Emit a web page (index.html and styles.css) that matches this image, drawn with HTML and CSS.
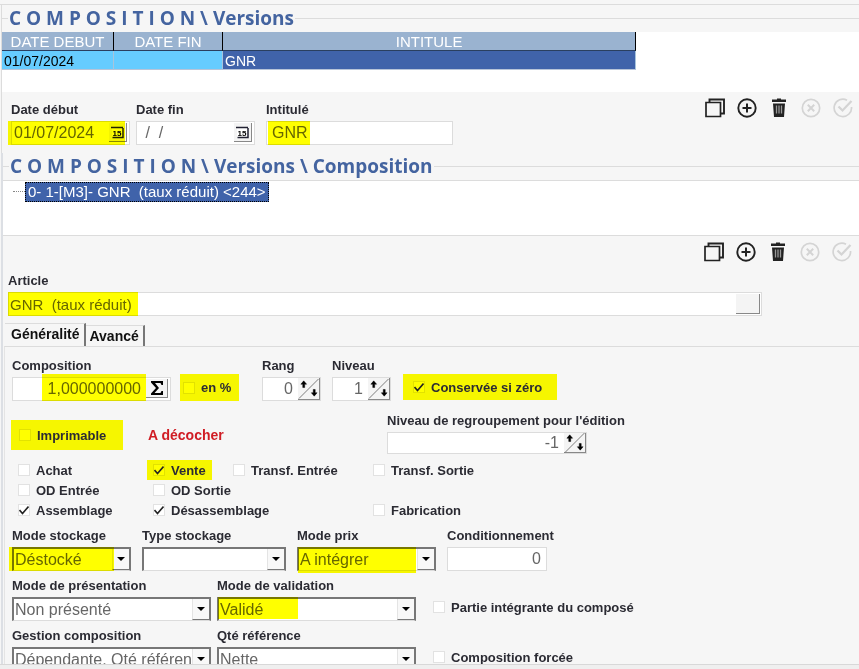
FILE: index.html
```html
<!DOCTYPE html>
<html lang="fr">
<head>
    <meta charset="UTF-8">
    <meta name="viewport" content="width=device-width, initial-scale=1.0">
    <title>Composition - Versions</title>
    <link rel="stylesheet" href="styles.css">
</head>
<body>

    <!-- Icônes des barres d'outils -->
    <svg class="sprite" aria-hidden="true">
        <symbol id="i-copy" viewBox="0 0 20 20">
            <path d="M1 4.500h14.500v14H1z" fill="none" stroke="currentColor" stroke-width="1.700"/>
            <path d="M4.500 4V1.500H19v14h-3" fill="none" stroke="currentColor" stroke-width="1.900"/>
        </symbol>
        <symbol id="i-add" viewBox="0 0 20 20">
            <circle cx="10" cy="10" r="8.700" fill="none" stroke="currentColor" stroke-width="1.900"/>
            <path d="M10 5.500v9M5.500 10h9" stroke="currentColor" stroke-width="2"/>
        </symbol>
        <symbol id="i-trash" viewBox="0 0 20 20">
            <path d="M3 1.500h5V.5h4v1h5v2.500H3zM4 5.500h12l-1 13.500H5z" fill="currentColor"/>
            <path d="M7.500 7.500v8M10 7.500v8M12.500 7.500v8" stroke="#999" stroke-width="1.300"/>
        </symbol>
        <symbol id="i-cancel" viewBox="0 0 20 20">
            <circle cx="10" cy="10" r="8.700" fill="none" stroke="currentColor" stroke-width="1.700"/>
            <path d="M6.800 6.800l6.400 6.400M13.200 6.800l-6.400 6.400" stroke="currentColor" stroke-width="2"/>
        </symbol>
        <symbol id="i-ok" viewBox="0 0 20 20">
            <path d="M14 2.200A8.700 8.700 0 1 0 18.500 9" fill="none" stroke="currentColor" stroke-width="1.700"/>
            <path d="M5.500 8.500l4 4L18.500 3" fill="none" stroke="currentColor" stroke-width="2.200"/>
        </symbol>
        <symbol id="i-calendar" viewBox="0 0 13 13">
            <path d="M1 2h10v9H1z" fill="#fff"/>
            <path d="M0 1.500h12M1.500 11.500h10.500V2" fill="none" stroke="#223" stroke-width="1.500"/>
            <text x="6" y="9.500" text-anchor="middle" font-family="Liberation Sans" font-size="8" font-weight="bold" fill="#000">15</text>
        </symbol>
        <symbol id="i-sum" viewBox="0 0 14 16">
            <path d="M1 1h12v4h-1.500L10.500 3H5l4 5-4.500 5h6l1-2H13v4H1v-1.500L6 8 1 2.500z" fill="#000"/>
        </symbol>
        <symbol id="i-spin" viewBox="0 0 22 22">
            <path d="M1 21.500L21.500 1" stroke="#777" stroke-width="1"/>
            <path d="M6 3l3 3.500H7V10H5V6.500H3zM17 19l-3-3.500h2V12h2v3.500h2z" fill="#000" stroke="#000" stroke-width=".5"/>
        </symbol>
    </svg>

    <main class="window">

        <section class="versions">
            <h2 class="legend">C O M P O S I T I O N \ Versions</h2>
            <div class="list">
                <table>
                    <thead>
                        <tr><th class="col-debut">DATE DEBUT</th><th class="col-fin">DATE FIN</th><th>INTITULE</th></tr>
                    </thead>
                    <tbody>
                        <tr><td>01/07/2024</td><td></td><td class="selected">GNR</td></tr>
                    </tbody>
                </table>
            </div>

            <div class="version-form">
                <div class="field w-date">
                    <label for="debut">Date début</label>
                    <div class="control mark mark-debut">
                        <input type="text" id="debut" value="01/07/2024">
                        <button type="button" class="cal" aria-label="Calendrier date début"><svg><use href="#i-calendar"/></svg></button>
                    </div>
                </div>
                <div class="field w-date">
                    <label for="fin">Date fin</label>
                    <div class="control">
                        <input type="text" id="fin" class="empty-date" value=" /  /">
                        <button type="button" class="cal" aria-label="Calendrier date fin"><svg><use href="#i-calendar"/></svg></button>
                    </div>
                </div>
                <div class="field w-intitule">
                    <label for="intitule">Intitulé</label>
                    <div class="control mark mark-intitule">
                        <input type="text" id="intitule" class="indent" value="GNR">
                    </div>
                </div>
                <div class="toolbar">
                    <button type="button" aria-label="Dupliquer"><svg><use href="#i-copy"/></svg></button>
                    <button type="button" aria-label="Ajouter"><svg><use href="#i-add"/></svg></button>
                    <button type="button" aria-label="Supprimer"><svg><use href="#i-trash"/></svg></button>
                    <button type="button" aria-label="Annuler" disabled><svg><use href="#i-cancel"/></svg></button>
                    <button type="button" aria-label="Valider" disabled><svg><use href="#i-ok"/></svg></button>
                </div>
            </div>
        </section>

        <section class="composition">
            <h2 class="legend">C O M P O S I T I O N \ Versions \ Composition</h2>
            <div class="tree">
                <span class="branch"></span><span class="node">0- 1-[M3]- GNR&nbsp; (taux réduit) &lt;244&gt;</span>
            </div>

            <div class="toolbar toolbar-row">
                <button type="button" aria-label="Dupliquer"><svg><use href="#i-copy"/></svg></button>
                <button type="button" aria-label="Ajouter"><svg><use href="#i-add"/></svg></button>
                <button type="button" aria-label="Supprimer"><svg><use href="#i-trash"/></svg></button>
                <button type="button" aria-label="Annuler" disabled><svg><use href="#i-cancel"/></svg></button>
                <button type="button" aria-label="Valider" disabled><svg><use href="#i-ok"/></svg></button>
            </div>

            <div class="field article">
                <label for="article">Article</label>
                <div class="control mark mark-article">
                    <input type="text" id="article" value="GNR  (taux réduit)">
                    <button type="button" class="browse" aria-label="Choisir un article"></button>
                </div>
            </div>

            <div class="tabs" role="tablist">
                <button type="button" role="tab" class="tab active" aria-selected="true">Généralité</button>
                <button type="button" role="tab" class="tab" aria-selected="false">Avancé</button>
            </div>

            <div class="panel">
                <div class="row">
                    <div class="field w-compo">
                        <label for="compo">Composition</label>
                        <div class="control mark mark-compo">
                            <input type="text" id="compo" class="num" value="1,000000000">
                            <button type="button" aria-label="Calculer"><svg class="i-sum"><use href="#i-sum"/></svg></button>
                        </div>
                    </div>
                    <label class="check yellow check-percent"><input type="checkbox">en %</label>
                    <div class="field w-spin rang">
                        <label for="rang">Rang</label>
                        <div class="control">
                            <input type="text" id="rang" class="num" value="0">
                            <button type="button" class="spin" aria-label="Modifier le rang"><svg><use href="#i-spin"/></svg></button>
                        </div>
                    </div>
                    <div class="field w-spin">
                        <label for="niveau">Niveau</label>
                        <div class="control">
                            <input type="text" id="niveau" class="num" value="1">
                            <button type="button" class="spin" aria-label="Modifier le niveau"><svg><use href="#i-spin"/></svg></button>
                        </div>
                    </div>
                    <label class="check yellow check-zero"><input type="checkbox" checked>Conservée si zéro</label>
                </div>

                <div class="row row-print">
                    <label class="check yellow check-print"><input type="checkbox">Imprimable</label>
                    <p class="note">A décocher</p>
                    <div class="field w-group">
                        <label for="groupe">Niveau de regroupement pour l'édition</label>
                        <div class="control">
                            <input type="text" id="groupe" class="num" value="-1">
                            <button type="button" class="spin" aria-label="Modifier le niveau de regroupement"><svg><use href="#i-spin"/></svg></button>
                        </div>
                    </div>
                </div>

                <div class="checks">
                    <label class="check"><input type="checkbox">Achat</label>
                    <label class="check yellow"><input type="checkbox" checked>Vente</label>
                    <label class="check"><input type="checkbox">Transf. Entrée</label>
                    <label class="check"><input type="checkbox">Transf. Sortie</label>
                    <label class="check first"><input type="checkbox">OD Entrée</label>
                    <label class="check"><input type="checkbox">OD Sortie</label>
                    <label class="check first"><input type="checkbox" checked>Assemblage</label>
                    <label class="check wide"><input type="checkbox" checked>Désassemblage</label>
                    <label class="check"><input type="checkbox">Fabrication</label>
                </div>

                <div class="row row-modes">
                    <div class="field w-stock">
                        <label for="stockage">Mode stockage</label>
                        <div class="combo mark mark-stock"><select id="stockage"><option>Déstocké</option></select></div>
                    </div>
                    <div class="field w-type">
                        <label for="type">Type stockage</label>
                        <div class="combo"><select id="type"><option></option></select></div>
                    </div>
                    <div class="field w-prix">
                        <label for="prix">Mode prix</label>
                        <div class="combo mark mark-prix"><select id="prix"><option>A intégrer</option></select></div>
                    </div>
                    <div class="field w-cond">
                        <label for="cond">Conditionnement</label>
                        <div class="control"><input type="text" id="cond" class="num" value="0"></div>
                    </div>
                </div>

                <div class="row row-wide">
                    <div class="field w-wide">
                        <label for="presentation">Mode de présentation</label>
                        <div class="combo"><select id="presentation"><option>Non présenté</option></select></div>
                    </div>
                    <div class="field w-wide">
                        <label for="validation">Mode de validation</label>
                        <div class="combo mark mark-valid"><select id="validation"><option>Validé</option></select></div>
                    </div>
                    <label class="check check-end"><input type="checkbox">Partie intégrante du composé</label>
                </div>

                <div class="row row-wide">
                    <div class="field w-wide">
                        <label for="gestion">Gestion composition</label>
                        <div class="combo"><select id="gestion"><option>Dépendante, Qté référence</option></select></div>
                    </div>
                    <div class="field w-wide">
                        <label for="qte">Qté référence</label>
                        <div class="combo"><select id="qte"><option>Nette</option></select></div>
                    </div>
                    <label class="check check-end"><input type="checkbox">Composition forcée</label>
                </div>
            </div>
        </section>
    </main>

    <footer class="status"></footer>

</body>
</html>
```
FILE: styles.css
```css
* {
    box-sizing: border-box;
}

body {
    margin: 0;
    height: 100vh;
    display: flex;
    flex-direction: column;
    overflow: hidden;
    background-color: #f6f6f6;
    font-family: "Liberation Sans", Arial, sans-serif;
    font-size: 16px;
    color: #2b2b33;
}

input, select, button {
    font-family: inherit;
    font-size: 16px;
    color: #666;
    margin: 0;
    border-radius: 0;
}

button {
    padding: 0;
    border: none;
    background: none;
    cursor: pointer;
}

.sprite {
    display: none;
}

.window {
    flex: 1;
    min-height: 0;
    overflow: hidden;
    margin-top: 4px;
    border-top: 1px solid #dcdcdc;
}

.status {
    height: 5px;
    flex-shrink: 0;
    background-color: #efefef;
    border-top: 1px solid #d8d8d8;
}

/* titres de groupe */
.legend {
    display: flex;
    align-items: center;
    gap: 1px;
    margin: 0;
    height: 27px;
    padding-bottom: 1px;
    font-family: "Open Sans", sans-serif;
    font-size: 19px;
    font-weight: bold;
    line-height: 25px;
    white-space: pre;
    color: #4464a0;
}

.legend::before, .legend::after {
    content: "";
    width: 6px;
    border-top: 1px solid #dcdcdc;
}

.legend::after {
    flex: 1;
}

.versions {
    border-left: 1px solid #dcdcdc;
    margin-left: 1px;
}

.composition {
    border-left: 2px solid #dcdfe4;
    margin-left: 1px;
}

/* liste des versions */
.list {
    min-height: 60px;
    background-color: white;
}

table {
    width: 74%;
    table-layout: fixed;
    border-collapse: separate;
    border-spacing: 0;
    font-size: 14px;
    line-height: 16px;
}

th {
    padding: 2px 0 0;
    height: 19px;
    font-size: 15px;
    font-weight: normal;
    color: white;
    background-color: #9ab3d0;
    border-right: 1px solid #000;
    border-bottom: 1px solid #2a3f60;
}

td {
    height: 19px;
    padding: 2px 2px 0;
    color: #000;
    background-color: #66ccff;
    border-right: 1px solid #a8c4dc;
    border-bottom: 1px solid #b8c4d8;
}

td.selected {
    background-color: #4063aa;
    color: white;
}

.col-debut {
    width: 112px;
}

.col-fin {
    width: 109px;
}

.version-form {
    display: flex;
    align-items: flex-start;
    gap: 6px;
    padding: 10px 6px 8px 9px;
}

/* champs */
.field {
    display: flex;
    flex-direction: column;
    gap: 4px;
}

.field > label {
    font-size: 13px;
    font-weight: bold;
    line-height: 15px;
    white-space: nowrap;
}

.control, .combo {
    position: relative;
    display: flex;
    height: 24px;
    background-color: white;
    border: 1px solid #dcdcdc;
}

.control input {
    flex: 1;
    min-width: 0;
    width: 100%;
    padding: 0 2px;
    border: none;
    background: none;
    outline: none;
}

.control .num {
    text-align: right;
    padding-right: 5px;
}

.control .indent {
    padding-left: 5px;
}

.control .empty-date {
    padding-left: 4px;
    white-space: pre;
}

.control button {
    width: 22px;
    margin: 1px 2px 2px 0;
    display: flex;
    align-items: center;
    justify-content: center;
    background-color: #f4f4f4;
    border-right: 1px solid #888;
    border-bottom: 1px solid #888;
}

.control .cal {
    width: 18px;
}

.control .browse {
    width: 24px;
    margin: 1px;
}

.control .spin {
    width: 22px;
    margin: 0;
}

.spin svg {
    width: 22px;
    height: 21px;
}

.cal svg {
    width: 13px;
    height: 13px;
}

.i-sum {
    width: 14px;
    height: 16px;
}

.w-date {
    width: 119px;
}

.version-form .w-date + .w-date {
    margin-right: 5px;
}

.w-intitule {
    width: 187px;
}

/* surligneur */
.mark::after {
    content: "";
    position: absolute;
    background-color: #ff0;
    mix-blend-mode: multiply;
    pointer-events: none;
    top: -1px;
    bottom: -1px;
    left: -1px;
}

.mark-debut::after {
    left: -4px;
    right: 4px;
}

.mark-intitule::after {
    left: 1px;
    width: 42px;
}

.mark-article::after {
    width: 130px;
}

.mark-compo::after {
    top: -4px;
    left: 29px;
    right: 24px;
}

.mark-stock::after {
    left: -5px;
    right: 15px;
}

.mark-prix::after {
    bottom: -3px;
    right: 18px;
}

.mark-valid::after {
    width: 80px;
    bottom: 1px;
}

.yellow {
    background-color: #f6f600;
}

/* outils */
.toolbar {
    display: flex;
    gap: 12px;
    margin-left: auto;
    margin-top: -4px;
}

.toolbar button {
    color: #222;
    height: 20px;
}

.toolbar button:disabled {
    color: #d4d4d4;
    cursor: default;
}

.toolbar svg {
    display: block;
    width: 20px;
    height: 20px;
}

.toolbar-row {
    justify-content: flex-end;
    margin: 0;
    padding: 6px 7px 11px;
}

/* arbre */
.tree {
    display: flex;
    align-items: flex-start;
    min-height: 56px;
    padding: 1px 0 0 10px;
    background-color: white;
    border-top: 1px solid #dcdcdc;
    border-bottom: 1px solid #dcdcdc;
}

.branch {
    width: 12px;
    margin-top: 9px;
    border-top: 1px dotted #888;
}

.node {
    padding: 0 2px;
    font-size: 15px;
    line-height: 18px;
    color: white;
    background-color: #4063aa;
    border: 1px dotted #000;
    white-space: pre;
}

.article {
    margin-right: 97px;
    padding-left: 5px;
}

.article input {
    padding-left: 1px;
    font-size: 15px;
}

/* onglets */
.tabs {
    display: flex;
    align-items: flex-end;
    height: 23px;
    margin: 7px 0 0 2px;
}

.tab {
    height: 21px;
    padding: 0 4px 0 3px;
    font-size: 14px;
    font-weight: bold;
    color: #111;
    border-top: 1px solid #dcdcdc;
    border-right: 2px solid #777;
}

.tab.active {
    height: 23px;
    padding: 0 5px 2px 6px;
}

.panel {
    margin-left: 1px;
    padding: 11px 7px 0;
    border-top: 1px solid #dcdcdc;
    border-left: 1px solid #e4e4e4;
}

.row {
    display: flex;
    align-items: flex-end;
    gap: 11px;
}

.w-compo {
    width: 159px;
}

.w-spin {
    width: 59px;
}

.rang {
    margin-left: 12px;
}

.check {
    display: flex;
    align-items: center;
    gap: 6px;
    height: 20px;
    font-size: 13px;
    font-weight: bold;
    white-space: nowrap;
}

.check input {
    appearance: none;
    flex-shrink: 0;
    width: 12px;
    height: 12px;
    margin: 0;
    background-color: white;
    border: 1px solid #e2e2e2;
}

.check input:checked {
    background: white url("data:image/svg+xml,%3Csvg xmlns='http://www.w3.org/2000/svg' viewBox='0 0 10 10'%3E%3Cpath d='M0.500 5l3 3.500L9.500 1.500' fill='none' stroke='%23222' stroke-width='1.600'/%3E%3C/svg%3E") center / 10px 10px no-repeat;
}

.yellow input, .yellow input:checked {
    background-color: #ff0;
    border-color: #e2e200;
}

.check-percent {
    height: 27px;
    width: 59px;
    margin-left: -2px;
    padding-left: 3px;
}

.check-zero {
    height: 26px;
    width: 154px;
    padding-left: 10px;
    margin: 0 0 1px 1px;
}

.row-print {
    margin-top: 12px;
    gap: 0;
}

.row-print .control {
    height: 22px;
}

.check-print {
    width: 112px;
    height: 30px;
    margin-bottom: 4px;
    margin-left: -1px;
    padding-left: 8px;
}

.note {
    width: 264px;
    margin: 0 0 10px;
    padding-left: 25px;
    font-size: 14px;
    font-weight: bold;
    line-height: 18px;
    color: #d01c24;
}

.w-group {
    width: 200px;
}

.checks {
    display: grid;
    grid-template-columns: 135px 80px 140px auto;
    margin: 6px 0 8px 6px;
}

.checks .first {
    grid-column: 1;
}

.checks .wide {
    grid-column: span 2;
}

.checks .yellow {
    margin-left: -6px;
    padding-left: 6px;
    width: 65px;
}

/* listes déroulantes */
.combo {
    border-top: 2px solid #777;
    border-left: 2px solid #777;
    border-right: 2px solid #777;
}

.combo select {
    appearance: none;
    width: 100%;
    padding: 0 16px 0 1px;
    border: none;
    background: none;
    outline: none;
}

.combo::before {
    content: "";
    position: absolute;
    top: 0;
    right: 0;
    bottom: 0;
    width: 16px;
    pointer-events: none;
    border-left: 1px solid #e4e4e4;
    border-bottom: 1px solid #777;
    background: #f8f8f8 url("data:image/svg+xml,%3Csvg xmlns='http://www.w3.org/2000/svg' viewBox='0 0 8 4'%3E%3Cpath d='M0 0h8L4 4z'/%3E%3C/svg%3E") center / 8px 4px no-repeat;
}

.combo.mark-stock::after, .combo.mark-prix::after, .combo.mark-valid::after {
    top: -2px;
}

.w-stock {
    width: 119px;
}

.w-type {
    width: 144px;
}

.w-prix {
    width: 139px;
}

.w-cond {
    width: 100px;
}

.row-wide {
    margin-top: 7px;
    gap: 6px;
}

.w-wide {
    width: 199px;
}

.check-end {
    margin: 0 0 4px 11px;
}
```
